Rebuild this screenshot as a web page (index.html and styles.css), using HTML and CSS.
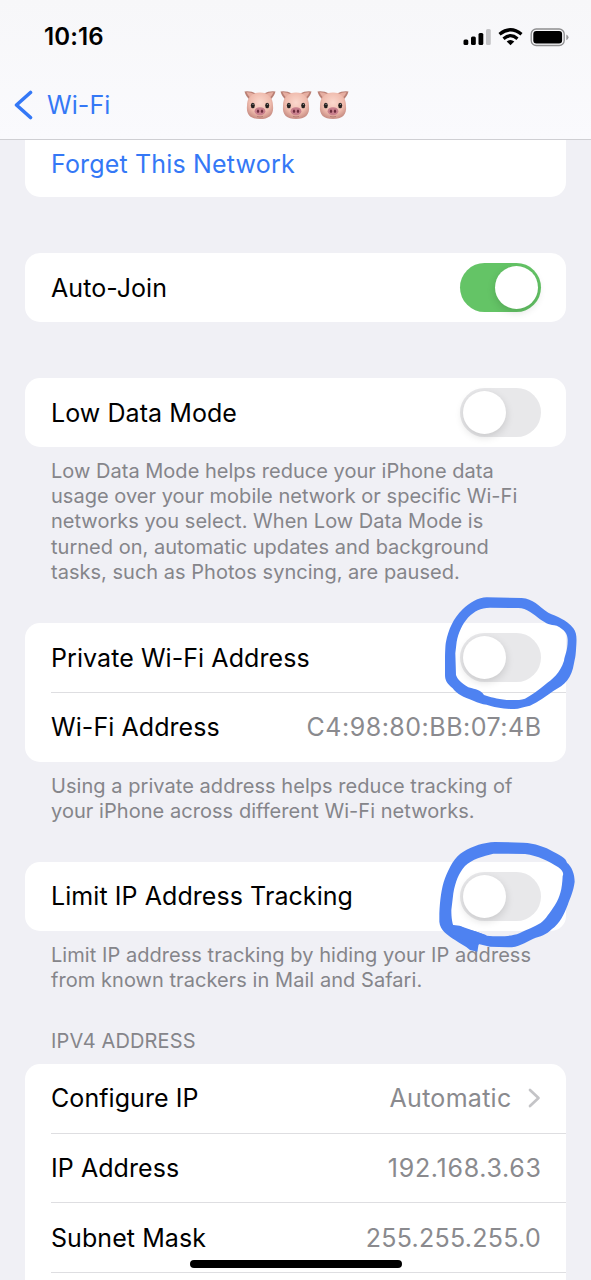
FILE: index.html
```html
<!DOCTYPE html>
<html lang="en">
<head>
<meta charset="utf-8">
<title>Wi-Fi</title>
<link rel="stylesheet" href="styles.css">
</head>
<body>
<div class="screen">
  <header class="top">
    <div class="status">
      <span class="time">10:16</span>
      <svg class="indicators" width="108" height="24" viewBox="0 0 108 24">
        <rect x="0.5" y="14.500" width="4.800" height="5.500" rx="1.5"/>
        <rect x="8" y="11.500" width="4.800" height="8.500" rx="1.5"/>
        <rect x="15.500" y="8" width="4.800" height="12" rx="1.500"/>
        <rect x="23" y="4" width="4.800" height="16" rx="1.500" fill="#c4c4c7"/>
        <g fill="none" stroke="#000" stroke-width="3.200">
          <path d="M36.500 9.300Q47.500 0.200 58.500 9.300"/>
          <path d="M40.500 13.700Q47.500 7.700 54.500 13.700"/>
        </g>
        <path d="M43.700 16.500Q47.500 13.300 51.300 16.500L47.500 20.300Z"/>
        <rect x="68.200" y="4" width="33" height="16.500" rx="5" fill="none" stroke="#8e8e90" stroke-width="1.300"/>
        <rect x="70.300" y="6.100" width="28.800" height="12.300" rx="3"/>
        <path d="M103.300 9.500Q105.500 10.500 105.500 12.300Q105.500 14.300 103.300 15.300Z" fill="#98989a"/>
      </svg>
    </div>
    <nav class="nav">
      <svg class="back" width="19" height="30" viewBox="0 0 19 30"><path d="M16.500 2.500L2.500 15L16.500 27.500" fill="none" stroke="#3478f6" stroke-width="3.600" stroke-linecap="round" stroke-linejoin="round"/></svg>
      <span class="back-label">Wi-Fi</span>
      <div class="pigs">
        <svg width="32" height="30" viewBox="0 0 32 30">
          <defs>
            <radialGradient id="skin" cx="50%" cy="38%" r="62%"><stop offset="0" stop-color="#fbd8cd"/><stop offset="0.650" stop-color="#efbbad"/><stop offset="1" stop-color="#c98f85"/></radialGradient>
            <g id="pig">
              <path d="M0.500 1.500Q7 .8 12 3.500L6 10Q2 7 .5 1.500ZM31.500 1.500Q25 .8 20 3.500L26 10Q30 7 31.500 1.500Z" fill="#b97f74"/>
              <path d="M2.500 2.300Q7 2 10 4L6 7.500Q3.500 5 2.500 2.300ZM29.500 2.300Q25 2 22 4L26 7.500Q28.500 5 29.500 2.300Z" fill="#e6aea1"/>
              <path d="M16 2.500C24 2.500 29 7 29 16C30 25 25 29 16 29C7 29 2 25 3 16C3 7 8 2.500 16 2.500Z" fill="url(#skin)"/>
              <ellipse cx="8.800" cy="15.500" rx="2" ry="2.700" fill="#24201f"/><ellipse cx="23.200" cy="15.500" rx="2" ry="2.700" fill="#24201f"/>
              <circle cx="9" cy="14.300" r=".6" fill="#aaa"/><circle cx="23.400" cy="14.300" r=".6" fill="#aaa"/>
              <ellipse cx="16" cy="21.200" rx="5.400" ry="4" fill="#c87f8c"/>
              <ellipse cx="14" cy="21.200" rx="1.100" ry="1.700" fill="#6c2c3c"/><ellipse cx="18" cy="21.200" rx="1.100" ry="1.700" fill="#6c2c3c"/>
              <path d="M13 26.500Q16 27.500 19 26.500" fill="none" stroke="#b27870" stroke-width=".9"/>
            </g>
          </defs>
          <use href="#pig"/>
        </svg>
        <svg width="32" height="30" viewBox="0 0 32 30"><use href="#pig"/></svg>
        <svg width="32" height="30" viewBox="0 0 32 30"><use href="#pig"/></svg>
      </div>
    </nav>
  </header>

  <main class="content">
    <section class="card card-cut"><div class="row link"><span class="t-forget">Forget This Network</span></div></section>
    <section class="card"><div class="row"><span>Auto-Join</span><i class="switch on"></i></div></section>
    <section class="card"><div class="row"><span>Low Data Mode</span><i class="switch"></i></div></section>
    <p class="note note-low">Low Data Mode helps reduce your iPhone data<br>usage over your mobile network or specific Wi-Fi<br>networks you select. When Low Data Mode is<br>turned on, automatic updates and background<br>tasks, such as Photos syncing, are paused.</p>
    <section class="card">
      <div class="row"><span>Private Wi-Fi Address</span><i class="switch"></i></div>
      <div class="row"><span>Wi-Fi Address</span><span class="value v-mac">C4:98:80:BB:07:4B</span></div>
    </section>
    <p class="note">Using a private address helps reduce tracking of<br>your iPhone across different Wi-Fi networks.</p>
    <section class="card"><div class="row"><span>Limit IP Address Tracking</span><i class="switch"></i></div></section>
    <p class="note note-limit">Limit IP address tracking by hiding your IP address<br>from known trackers in Mail and Safari.</p>
    <h2 class="heading">IPV4 ADDRESS</h2>
    <section class="card">
      <div class="row"><span>Configure IP</span><span class="value v-auto">Automatic</span><svg class="chevron" width="13" height="22" viewBox="0 0 13 22"><path d="M2 3L10.500 11L2 19" fill="none" stroke="#c4c4c7" stroke-width="2.700" stroke-linecap="round" stroke-linejoin="round"/></svg></div>
      <div class="row"><span>IP Address</span><span class="value v-ip">192.168.3.63</span></div>
      <div class="row"><span>Subnet Mask</span><span class="value v-mask">255.255.255.0</span></div>
      <div class="row"></div>
    </section>
  </main>

  <svg class="marker marker-private" width="161" height="180" viewBox="0 0 483 540">
    <path fill="#4e82f1" fill-rule="evenodd" d="M48 155C55 120 70 85 98 58C120 38 145 22 170 22L275 24C310 26 325 48 355 68C380 80 410 88 430 115C442 130 440 150 438 180C436 205 436 200 432 220C425 265 405 285 370 303C350 318 325 335 300 347C280 350 265 358 250 357C225 357 190 352 170 344C155 342 145 338 130 332C100 322 80 312 68 295C50 280 45 270 45 255L45 200C46 175 46 165 48 155ZM80 155C85 130 95 105 115 82C135 62 150 54 180 53L265 54C290 54 310 72 330 88C350 102 360 105 380 107C405 120 413 132 413 150C413 185 404 195 402 212C390 250 367 267 345 284C325 300 305 315 285 326C265 332 245 330 230 330C200 326 180 322 162 315C150 298 140 300 115 292C95 280 82 268 78 255L76 190Z"/>
  </svg>
  <svg class="marker marker-limit" width="161" height="150" viewBox="0 0 483 450">
    <path fill="#4e82f1" fill-rule="evenodd" d="M28 250C30 210 34 175 45 145C58 112 75 78 100 65C130 47 160 38 195 36L280 38C315 40 345 50 370 65C390 76 407 82 411 98C425 110 434 130 434 155C430 185 422 200 413 225C402 253 390 280 365 298C350 314 330 320 310 326C285 338 265 352 235 352L180 350L146 342L142 365L120 360C105 346 90 342 75 330C52 315 30 300 28 275ZM70 190C76 155 86 130 105 108C125 88 160 78 190 71L285 72C325 78 355 92 385 112C398 122 402 130 398 138C396 180 390 200 375 225C360 247 347 268 332 279C312 292 292 297 268 310C245 320 205 320 170 317C145 306 125 300 105 297C95 290 88 284 78 292L76 299C66 285 64 260 64 240Z"/>
    <path fill="#4e82f1" d="M66 285Q88 284 105 293L170 316L146 344L60 318Z"/>
  </svg>
  <div class="home"></div>
</div>
</body>
</html>
```
FILE: styles.css
```css
* { box-sizing: border-box; }
body { margin: 0; background: #f0f0f5; }
.screen {
  position: relative;
  width: 591px;
  height: 1280px;
  overflow: hidden;
  background: #f0f0f5;
  color: #000;
  font-family: Inter, "Liberation Sans", sans-serif;
  font-size: 25px;
  letter-spacing: 0.070px;
}
.top {
  height: 140px;
  background: linear-gradient(#f7f7f9, #fafafd);
  border-bottom: 1px solid #cfcfd3;
}
.status {
  height: 72px;
  padding: 1px 20.500px 0 44px;
  display: flex;
  align-items: center;
  justify-content: space-between;
}
.time { font-size: 24px; font-weight: 600; letter-spacing: 0.100px; }
.nav { height: 66px; display: flex; align-items: center; padding-left: 14px; }
.back-label { width: 211px; padding-left: 14px; color: #3478f6; }
.pigs { display: flex; gap: 4.300px; }
.content { padding: 0 25px; }
.card { background: #fff; border-radius: 15px; margin-bottom: 56px; }
.card-cut { height: 57px; border-radius: 0 0 15px 15px; overflow: hidden; }
.card-cut .row { height: 48px; }
.row {
  height: 69px;
  margin-left: 26px;
  padding-right: 25px;
  display: flex;
  align-items: center;
  white-space: nowrap;
}
.row + .row { border-top: 1px solid #dedee1; height: 69.500px; }
.row > span:first-child { flex: 1; }
.link { color: #3478f6; }
.t-forget { letter-spacing: 0.170px; }
.value { color: #8a8a8e; }
.v-mac { letter-spacing: 0.500px; margin-right: -0.500px; }
.v-ip { letter-spacing: 0.700px; margin-right: -0.700px; }
.v-mask { letter-spacing: 0.280px; }
.v-auto { letter-spacing: 0.280px; }
.chevron { margin-left: 16.500px; }
.switch {
  width: 81px;
  height: 49px;
  padding: 3px;
  border-radius: 25px;
  background: #e8e8ea;
}
.switch::before {
  content: "";
  display: block;
  width: 43px;
  height: 43px;
  border-radius: 50%;
  background: #fff;
  box-shadow: 0 3px 9px rgba(0, 0, 0, 0.14);
}
.switch.on { background: #64c466; display: flex; justify-content: flex-end; }
.note {
  margin: -44px 0 38px 26px;
  color: #85858a;
  font-size: 20px;
  letter-spacing: 0.050px;
  line-height: 25.200px;
  white-space: nowrap;
}
.note-low { letter-spacing: 0.020px; }
.note-limit { margin-bottom: 34.500px; }
.heading {
  margin: 0 0 10px 26px;
  color: #85858a;
  font-size: 20px;
  font-weight: 400;
  letter-spacing: 0.130px;
  line-height: 26px;
}
.marker { position: absolute; left: 430px; }
.marker-private { top: 590px; }
.marker-limit { top: 830px; }
.home {
  position: absolute;
  left: 190px;
  top: 1260px;
  width: 212px;
  height: 8px;
  border-radius: 4px;
  background: #000;
}
```
